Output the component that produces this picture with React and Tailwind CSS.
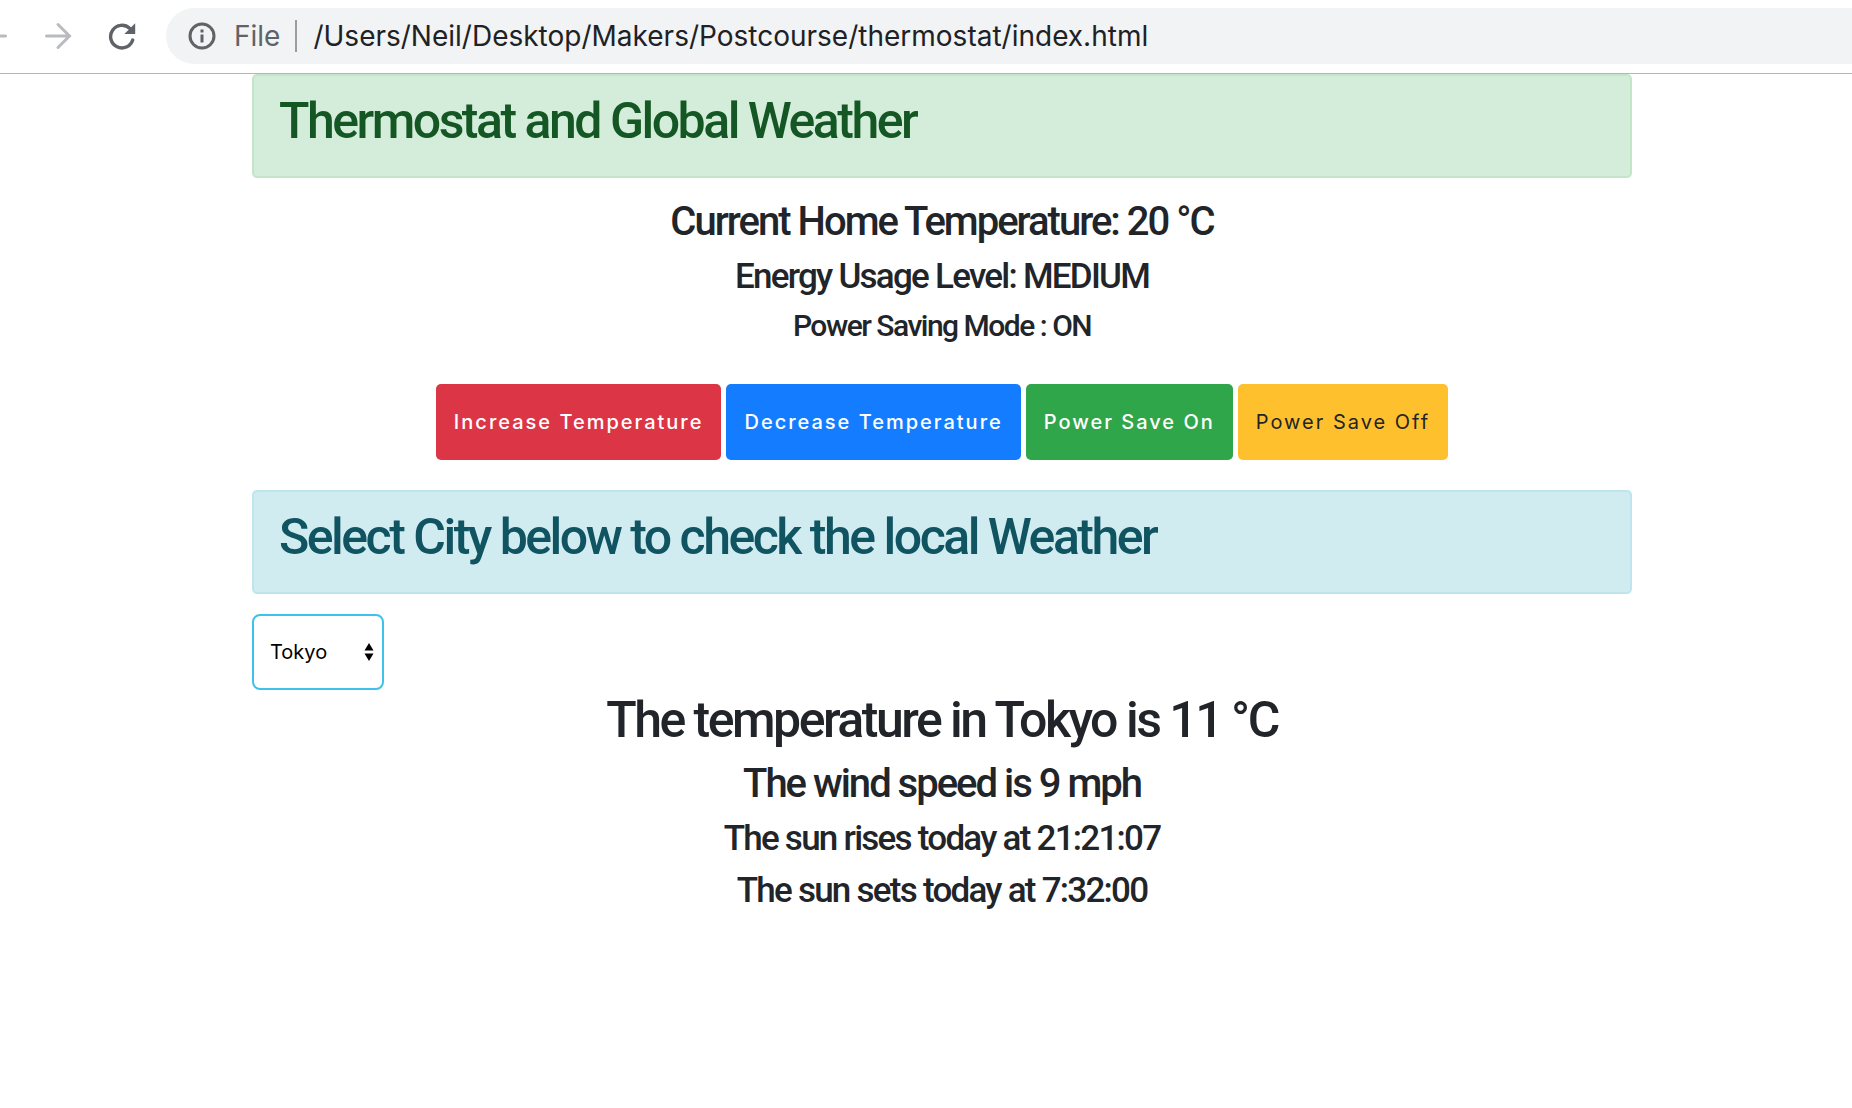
import React, { useState } from "react";

const cities = ["Tokyo", "London", "Paris", "New York"];

function ArrowLeft() {
  return (
    <svg viewBox="0 0 28 28" className="h-7 w-7" fill="none" stroke="#b9bbbe" strokeWidth="3" strokeLinecap="round">
      <path d="M25.500 14H3M14 2.500 2.500 14 14 25.500" />
    </svg>
  );
}

function ArrowRight() {
  return (
    <svg viewBox="0 0 28 28" className="h-7 w-7" fill="none" stroke="#b9bbbe" strokeWidth="3" strokeLinecap="round">
      <path d="M2.500 14H25M14 2.500 25.500 14 14 25.500" strokeLinejoin="miter" />
    </svg>
  );
}

function Reload() {
  return (
    <svg viewBox="0 0 28 28" className="h-7 w-7">
      <path d="M21.600 6.300A11.300 11.300 0 1 0 24.700 18" fill="none" stroke="#5f6368" strokeWidth="3.400" strokeLinecap="round" />
      <path d="M27.200 1.300V12H16.400Z" fill="#5f6368" />
    </svg>
  );
}

function Info() {
  return (
    <svg viewBox="0 0 28 28" className="h-7 w-7">
      <circle cx="14" cy="14" r="12" fill="none" stroke="#5f6368" strokeWidth="3" />
      <path d="M12.500 7.500h3v3h-3zM12.500 12.500h3v8h-3z" fill="#5f6368" />
    </svg>
  );
}

function BrowserBar() {
  return (
    <header className="flex h-[74px] items-center overflow-hidden border-b border-[#b6b4b6] pt-2 pb-[9px]">
      <button aria-label="Back" className="-ml-5 shrink-0"><ArrowLeft /></button>
      <button aria-label="Forward" className="ml-9 shrink-0"><ArrowRight /></button>
      <button aria-label="Reload" className="ml-9 shrink-0"><Reload /></button>
      <div className="ml-[30px] flex h-14 min-w-0 flex-1 items-center rounded-l-full bg-[#f1f3f4] pl-[22px] text-[28px]">
        <Info />
        <span className="ml-[18px] text-[#5f6368]">File</span>
        <span className="ml-[15px] h-8 w-0.5 bg-[#9b9da0]" />
        <input
          aria-label="Address"
          className="ml-4 min-w-0 flex-1 bg-transparent text-[#202124] outline-none"
          defaultValue="/Users/Neil/Desktop/Makers/Postcourse/thermostat/index.html"
        />
      </div>
    </header>
  );
}

const button = "h-[76px] rounded-[5px] px-[18px] text-xl tracking-widest";
const heading = "font-['Roboto',sans-serif] font-medium tracking-tighter";
const h1 = `${heading} text-[50px] leading-[60px]`;
const h2 = `${heading} text-[40px] leading-[48px]`;
const h3 = `${heading} text-[35px] leading-[42px]`;
const h4 = `${heading} text-[30px] leading-9`;

export default function App() {
  const [city, setCity] = useState("Tokyo");
  return (
    <div className="min-h-screen bg-white font-['Inter',sans-serif] text-[#212529]">
      <BrowserBar />
      <main className="pl-8">
        <div className="mx-auto max-w-[1380px]">
          <div className="rounded-[5px] border-2 border-[#c3e6cb] bg-[#d4edda] px-[25px] pt-[15px] pb-[25px] text-[#155724]">
            <h1 className={h1}>Thermostat and Global Weather</h1>
          </div>

          <section className="mt-5 flex flex-col gap-2.5 text-center">
            <h2 className={h2}>Current Home Temperature: 20 °C</h2>
            <h3 className={h3}>Energy Usage Level: MEDIUM</h3>
            <h4 className={h4}>Power Saving Mode : ON</h4>
          </section>

          <div className="mt-10 mb-[30px] flex flex-wrap justify-center gap-[5px]">
            <button className={`${button} bg-[#dc3545] font-medium text-white`}>Increase Temperature</button>
            <button className={`${button} bg-[#147dff] font-medium text-white`}>Decrease Temperature</button>
            <button className={`${button} bg-[#2fa64a] font-medium text-white`}>Power Save On</button>
            <button className={`${button} bg-[#ffc02e] text-[#212529]`}>Power Save Off</button>
          </div>

          <div className="rounded-[5px] border-2 border-[#bee5eb] bg-[#d1ecf1] px-[25px] pt-[15px] pb-[25px] text-[#0f5460]">
            <h1 className={h1}>Select City below to check the local Weather</h1>
          </div>

          <div className="relative mt-5 w-[132px]">
            <select
              aria-label="City"
              value={city}
              onChange={(e) => setCity(e.target.value)}
              className="block h-[76px] w-full appearance-none rounded-lg border-2 border-[#3fc1ee] bg-white pl-4 text-xl text-black outline-none"
            >
              {cities.map((c) => (
                <option key={c}>{c}</option>
              ))}
            </select>
            <svg viewBox="0 0 10 18" className="pointer-events-none absolute top-[29px] right-2.5 h-[18px] w-2.5">
              <path d="M5 0 9.500 7.500H.5ZM5 18 9.500 10.500H.5Z" />
            </svg>
          </div>

          <section className="flex flex-col gap-2.5 text-center">
            <h1 className={h1}>The temperature in {city} is 11 °C</h1>
            <h2 className={h2}>The wind speed is 9 mph</h2>
            <h3 className={h3}>The sun rises today at 21:21:07</h3>
            <h3 className={h3}>The sun sets today at 7:32:00</h3>
          </section>
        </div>
      </main>
    </div>
  );
}
